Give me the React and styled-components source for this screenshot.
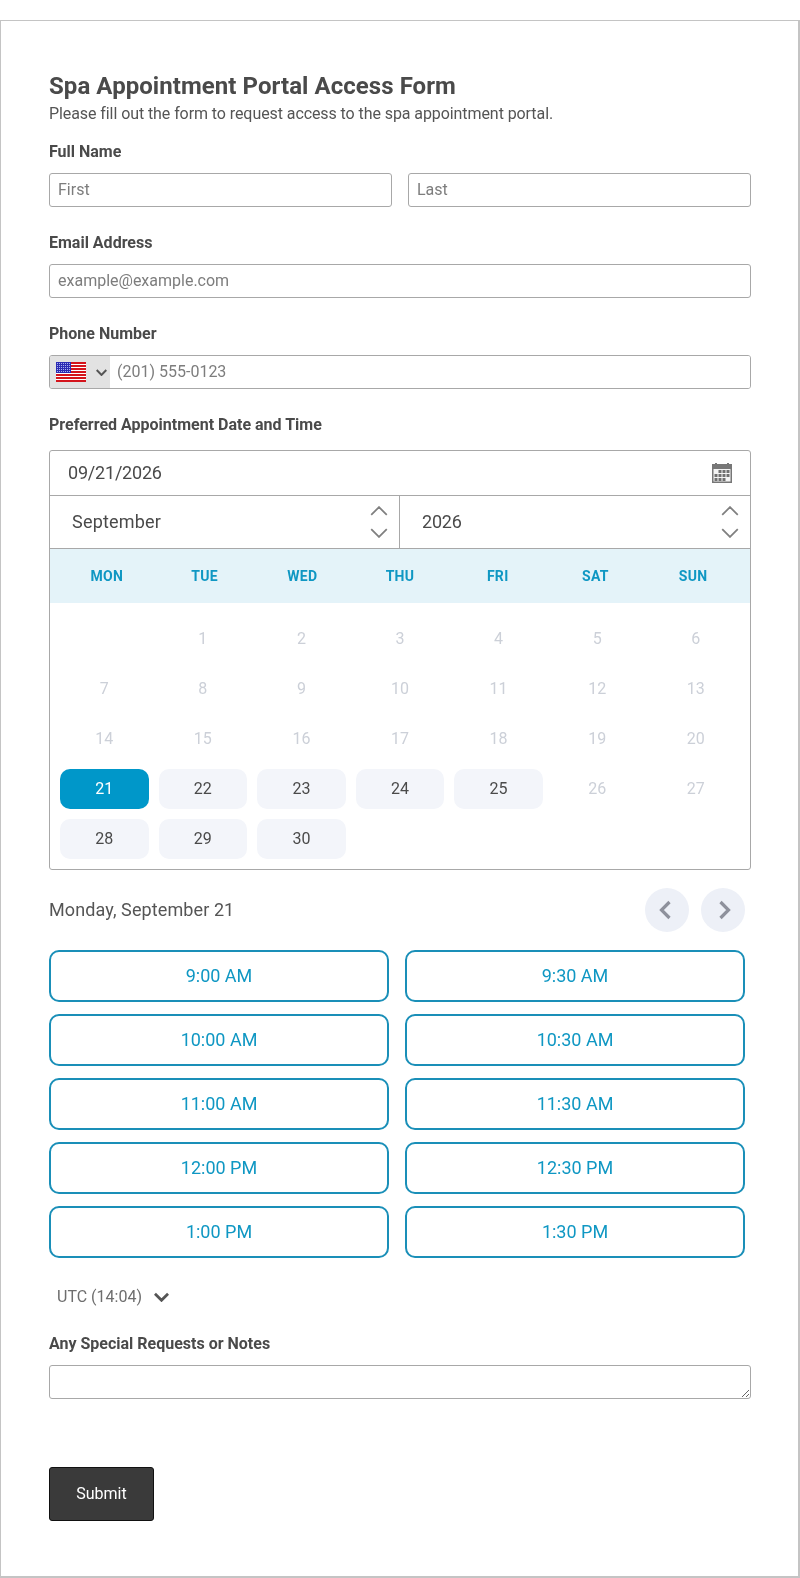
import React from "react";
import styled, { createGlobalStyle } from "styled-components";

const GlobalStyle = createGlobalStyle`
  html, body {
    margin: 0;
    padding: 0;
    background: #fff;
  }
  * {
    box-sizing: border-box;
  }
`;

const Page = styled.div`
  width: 800px;
  height: 1578px;
  padding-top: 20px;
  font-family: Roboto, "Liberation Sans", sans-serif;
  color: #4a4a4a;
  will-change: transform;
`;

const Card = styled.form`
  height: 1558px;
  border: 1px solid #c4c4c4;
  border-right-width: 2px;
  border-bottom-width: 2px;
  padding: 51px 47px 0 48px;
`;

const Title = styled.h1`
  margin: 0;
  font-size: 24px;
  line-height: 28px;
  font-weight: 700;
  letter-spacing: 0.06px;
  color: #4a4a4a;
`;

const Subtitle = styled.p`
  margin: 0 0 13px;
  font-size: 16px;
  line-height: 28px;
  letter-spacing: -0.08px;
  color: #555;
`;

const Label = styled.label`
  display: block;
  font-size: 16px;
  line-height: 22px;
  font-weight: 700;
  color: #4a4a4a;
  margin-bottom: ${(p) => p.$gap || 10}px;
`;

const Field = styled.div`
  margin-bottom: 25px;
`;

const NameRow = styled.div`
  display: grid;
  grid-template-columns: 343px 343px;
  gap: 16px;
`;

const TextInput = styled.input`
  display: block;
  width: 100%;
  height: 34px;
  padding: 0 8px 2px;
  border: 1px solid #a8a8a8;
  border-radius: 3px;
  background: #fff;
  font: 400 16px Roboto, sans-serif;
  color: #4a4a4a;
  outline: none;
  &::placeholder {
    color: #7d7d7d;
    opacity: 1;
  }
`;

const PhoneBox = styled.div`
  display: flex;
  height: 34px;
  border: 1px solid #a8a8a8;
  border-radius: 3px;
  overflow: hidden;
`;

const FlagPicker = styled.div`
  display: flex;
  align-items: center;
  gap: 10px;
  width: 60px;
  padding-left: 6px;
  background: #e2e2e2;
`;

const PhoneInput = styled(TextInput)`
  flex: 1;
  height: 32px;
  border: none;
  border-radius: 0;
  padding-left: 7px;
`;

const DateInputRow = styled.div`
  display: flex;
  align-items: center;
  justify-content: space-between;
  height: 45px;
  padding: 0 18px;
  border-bottom: 1px solid #a8a8a8;
`;

const DateValue = styled.input`
  width: 300px;
  border: none;
  outline: none;
  padding: 0 0 2px;
  font: 400 18px Roboto, sans-serif;
  letter-spacing: -0.2px;
  color: #4a4a4a;
`;

const CalendarBox = styled.div`
  border: 1px solid #a8a8a8;
  border-radius: 3px;
  overflow: hidden;
`;

const SelectRow = styled.div`
  display: grid;
  grid-template-columns: 349px 1fr;
  height: 53px;
  border-bottom: 1px solid #a8a8a8;
`;

const SelectCell = styled.div`
  display: flex;
  align-items: center;
  justify-content: space-between;
  padding: 0 11px 0 22px;
  font-size: 18px;
  letter-spacing: ${(p) => p.$spacing}px;
  color: #4a4a4a;
  & + & {
    border-left: 1px solid #a8a8a8;
  }
`;

const SelectValue = styled.span`
  padding-bottom: 2px;
`;

const Stepper = styled.div`
  display: flex;
  flex-direction: column;
  gap: 12px;
`;

const WeekHeader = styled.div`
  display: grid;
  grid-template-columns: repeat(7, 1fr);
  align-items: center;
  height: 54px;
  padding: 0 8px;
  background: #e4f3f9;
`;

const WeekDay = styled.div`
  text-align: center;
  font-size: 14px;
  font-weight: 700;
  letter-spacing: 0.3px;
  color: #0f97c3;
`;

const DaysGrid = styled.div`
  display: grid;
  grid-template-columns: repeat(7, 1fr);
  grid-auto-rows: 40px;
  gap: 10px;
  padding: 16px 10px 9.5px;
`;

const Day = styled.div`
  display: flex;
  align-items: center;
  justify-content: center;
  padding-bottom: 2px;
  border-radius: 10px;
  font-size: 16px;
  color: ${(p) => (p.$selected ? "#fff" : p.$open ? "#4a4a4a" : "#ccd0d8")};
  background: ${(p) =>
    p.$selected ? "#0097c9" : p.$open ? "#f3f5fa" : "transparent"};
`;

const DayHeading = styled.div`
  display: flex;
  align-items: center;
  justify-content: space-between;
  height: 44px;
  margin: 18.5px 6px 18px 0;
  font-size: 18px;
  letter-spacing: 0.1px;
  color: #555;
`;

const DayLabel = styled.span`
  padding-bottom: 2px;
`;

const NavButtons = styled.div`
  display: flex;
  gap: 12px;
`;

const NavButton = styled.button`
  display: flex;
  align-items: center;
  justify-content: center;
  width: 44px;
  height: 44px;
  padding: 0;
  border: none;
  border-radius: 50%;
  background: #edf0f7;
`;

const SlotGrid = styled.div`
  display: grid;
  grid-template-columns: 340px 340px;
  gap: 12px 16px;
`;

const Slot = styled.button`
  height: 52px;
  padding: 0 0 2px;
  border: 2px solid #1a8fb8;
  border-radius: 10px;
  background: #fff;
  font: 400 18px Roboto, sans-serif;
  color: #0f97c3;
`;

const Zone = styled.div`
  display: flex;
  align-items: center;
  gap: 12px;
  height: 24px;
  margin: 27px 0 24px 8px;
  font-size: 16px;
  color: #6e6e6e;
`;

const ZoneLabel = styled.span`
  padding-bottom: 2px;
`;

const Notes = styled.textarea`
  display: block;
  width: 702px;
  height: 34px;
  border: 1px solid #a8a8a8;
  border-radius: 3px;
  outline: none;
`;

const SubmitButton = styled.button`
  display: block;
  width: 105px;
  height: 54px;
  margin-top: 68px;
  padding: 0 0 2px;
  border: 1px solid #111;
  border-radius: 3px;
  background: #3a3a3a;
  font: 400 16px Roboto, sans-serif;
  color: #fff;
`;

const UsFlag = () => (
  <svg width="30" height="20" viewBox="0 0 30 20">
    <rect width="30" height="20" fill="#fff" />
    {[0, 3, 6, 9, 12, 15, 18].map((y) => (
      <rect key={y} y={y} width="30" height="2" fill="#d4141c" />
    ))}
    <rect width="15" height="11" fill="#2c2cb4" />
    {[1, 3, 5, 7, 9].map((y) =>
      [1, 3, 5, 7, 9, 11, 13].map((x) => (
        <rect key={x + "-" + y} x={x} y={y} width="1" height="1" fill="#aab0ee" />
      ))
    )}
  </svg>
);

const Chevron = ({ dir, size = 16, h = 9, color = "#808080", width = 2 }) => (
  <svg width={size} height={h} viewBox="0 0 16 9">
    <polyline
      points={dir === "up" ? "1,8 8,1 15,8" : "1,1 8,8 15,1"}
      fill="none"
      stroke={color}
      strokeWidth={width}
    />
  </svg>
);

const CalendarIcon = () => (
  <svg width="20" height="20" viewBox="0 0 20 20">
    <rect x="0" y="1" width="20" height="19" fill="#777" />
    <rect x="1.5" y="6" width="17" height="12.5" fill="#f4f4f4" />
    <rect x="3" y="0" width="2" height="2" fill="#777" />
    <rect x="15" y="0" width="2" height="2" fill="#777" />
    {[7, 11, 15].map((y) =>
      [2.5, 6.5, 10.5, 14.5].map((x) =>
        (y === 7 && x < 5) || (y === 15 && x > 12) ? null : (
          <rect key={x + "-" + y} x={x} y={y} width="3" height="3" fill="#707070" />
        )
      )
    )}
  </svg>
);

const WEEK = ["MON", "TUE", "WED", "THU", "FRI", "SAT", "SUN"];
const OPEN_DAYS = [22, 23, 24, 25, 28, 29, 30];
const SLOTS = [
  "9:00 AM",
  "9:30 AM",
  "10:00 AM",
  "10:30 AM",
  "11:00 AM",
  "11:30 AM",
  "12:00 PM",
  "12:30 PM",
  "1:00 PM",
  "1:30 PM",
];

const StepperIcons = () => (
  <Stepper>
    <Chevron dir="up" size={18} h={10} width={1.6} />
    <Chevron dir="down" size={18} h={10} width={1.6} />
  </Stepper>
);

const App = () => {
  const days = Array.from({ length: 30 }, (_, i) => i + 1);

  return (
    <Page>
      <GlobalStyle />
      <Card onSubmit={(e) => e.preventDefault()}>
        <Title>Spa Appointment Portal Access Form</Title>
        <Subtitle>Please fill out the form to request access to the spa appointment portal.</Subtitle>

        <Field>
          <Label>Full Name</Label>
          <NameRow>
            <TextInput placeholder="First" />
            <TextInput placeholder="Last" />
          </NameRow>
        </Field>

        <Field>
          <Label>Email Address</Label>
          <TextInput placeholder="example@example.com" />
        </Field>

        <Field>
          <Label>Phone Number</Label>
          <PhoneBox>
            <FlagPicker>
              <UsFlag />
              <Chevron dir="down" size={11} h={7} color="#555" width={3} />
            </FlagPicker>
            <PhoneInput placeholder="(201) 555-0123" />
          </PhoneBox>
        </Field>

        <Label $gap={14}>Preferred Appointment Date and Time</Label>
        <CalendarBox>
          <DateInputRow>
            <DateValue defaultValue="09/21/2026" readOnly />
            <CalendarIcon />
          </DateInputRow>
          <SelectRow>
            <SelectCell $spacing={0.2}>
              <SelectValue>September</SelectValue>
              <StepperIcons />
            </SelectCell>
            <SelectCell $spacing={-0.2}>
              <SelectValue>2026</SelectValue>
              <StepperIcons />
            </SelectCell>
          </SelectRow>
          <WeekHeader>
            {WEEK.map((d) => (
              <WeekDay key={d}>{d}</WeekDay>
            ))}
          </WeekHeader>
          <DaysGrid>
            <div />
            {days.map((d) => (
              <Day key={d} $selected={d === 21} $open={OPEN_DAYS.includes(d)}>
                {d}
              </Day>
            ))}
          </DaysGrid>
        </CalendarBox>

        <DayHeading>
          <DayLabel>Monday, September 21</DayLabel>
          <NavButtons>
            <NavButton type="button" aria-label="Previous day">
              <svg width="16" height="24" viewBox="0 0 16 24">
                <polyline points="10.5,4 2.5,12 10.5,20" fill="none" stroke="#8e919c" strokeWidth="3.2" />
              </svg>
            </NavButton>
            <NavButton type="button" aria-label="Next day">
              <svg width="16" height="24" viewBox="0 0 16 24">
                <polyline points="5.5,4 13.5,12 5.5,20" fill="none" stroke="#8e919c" strokeWidth="3.2" />
              </svg>
            </NavButton>
          </NavButtons>
        </DayHeading>

        <SlotGrid>
          {SLOTS.map((s) => (
            <Slot type="button" key={s}>
              {s}
            </Slot>
          ))}
        </SlotGrid>

        <Zone>
          <ZoneLabel>UTC (14:04)</ZoneLabel>
          <Chevron dir="down" size={15} h={10} color="#555" width={3} />
        </Zone>

        <Label>Any Special Requests or Notes</Label>
        <Notes />

        <SubmitButton type="submit">Submit</SubmitButton>
      </Card>
    </Page>
  );
};

export default App;
